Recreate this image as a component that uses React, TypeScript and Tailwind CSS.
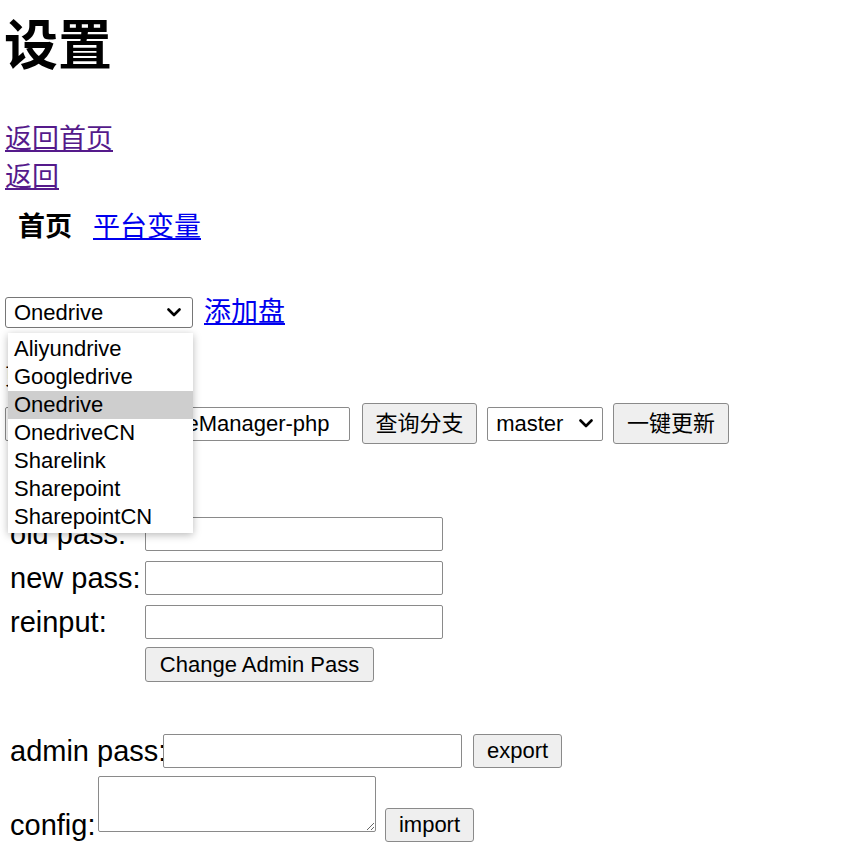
import React from "react";

function Chevron({ className }: { className?: string }) {
  return (
    <svg className={className} width="14" height="9" viewBox="0 0 14 9" fill="none">
      <path d="M1.5 1.5 L7 7 L12.5 1.5" stroke="#000" strokeWidth="2.6" strokeLinecap="round" strokeLinejoin="round" />
    </svg>
  );
}

const options = ["Aliyundrive", "Googledrive", "Onedrive", "OnedriveCN", "Sharelink", "Sharepoint", "SharepointCN"];

export default function App() {
  return (
    <div className="relative min-h-[853px] w-[857px] overflow-hidden bg-white text-black font-['Liberation_Sans','Noto_Sans_CJK_SC',sans-serif]">
      <h1 className="pl-[4px] pt-[16px] text-[54px] leading-[60px] font-bold">设置</h1>

      <div className="mt-[44px] pl-[5px] text-[27px] leading-[38px]">
        <div>
          <a href="#" className="text-[#551a8b] underline">返回首页</a>
        </div>
        <div>
          <a href="#" className="text-[#551a8b] underline">返回</a>
        </div>
      </div>

      <div className="mt-[12px] flex pl-[18px] text-[27px] leading-[38px]">
        <span className="font-bold">首页</span>
        <a href="#" className="ml-[21px] text-[#0000ee] underline">平台变量</a>
      </div>

      <div className="mt-[51px] flex items-center pl-[5px]">
        <div className="flex h-[31px] w-[188px] items-center justify-between rounded-[3px] border-[1.5px] border-[#767676] bg-white pl-[8px] pr-[11px] text-[22px] leading-none">
          <span>Onedrive</span>
          <Chevron />
        </div>
        <a href="#" className="ml-[11px] text-[27px] leading-[31px] text-[#0000ee] underline">添加盘</a>
      </div>

      <div className="mt-[34px] pl-[5px] text-[22px] leading-[30px]">更新到：</div>

      <div className="mt-[11px] flex h-[41px] items-center pl-[5px] text-[22px]">
        <input
          readOnly
          value="qkqpttgf"
          className="h-[34px] w-[131px] rounded-[2px] border-[1.5px] border-[#8a8a8a] px-[6px] text-[22px] outline-none"
        />
        <span className="mx-[4px]">/</span>
        <input
          readOnly
          value="OneManager-php"
          className="h-[34px] w-[200px] rounded-[2px] border-[1.5px] border-[#8a8a8a] px-[6px] text-[22px] outline-none"
        />
        <button className="ml-[12px] h-[41px] w-[115px] rounded-[3px] border-[1.5px] border-[#8a8a8a] bg-[#efefef] text-[22px] leading-none">
          查询分支
        </button>
        <div className="ml-[10px] flex h-[34px] w-[116px] items-center justify-between rounded-[2px] border-[1.5px] border-[#8a8a8a] bg-white pl-[8px] pr-[9px] text-[22px] leading-none">
          <span>master</span>
          <Chevron />
        </div>
        <button className="ml-[10px] h-[41px] w-[116px] rounded-[3px] border-[1.5px] border-[#8a8a8a] bg-[#efefef] text-[22px] leading-none">
          一键更新
        </button>
      </div>

      <div className="mt-[68px] text-[29px]">
        {["old pass:", "new pass:", "reinput:"].map((l) => (
          <div key={l} className="flex h-[44px] items-center">
            <span className="w-[145px] shrink-0 whitespace-nowrap pl-[10px] leading-[34px]">{l}</span>
            <input
              type="password"
              readOnly
              className="h-[34px] w-[298px] rounded-[2px] border-[1.5px] border-[#8a8a8a] outline-none"
            />
          </div>
        ))}
        <div className="flex h-[41px] items-center pl-[145px]">
          <button className="h-[35px] w-[229px] rounded-[3px] border-[1.5px] border-[#8a8a8a] bg-[#efefef] text-[22px] leading-none">
            Change Admin Pass
          </button>
        </div>
      </div>

      <div className="mt-[49px] flex h-[34px] items-center text-[29px]">
        <span className="w-[163px] shrink-0 whitespace-nowrap pl-[10px] leading-[34px]">admin pass:</span>
        <input
          type="password"
          readOnly
          className="h-[34px] w-[299px] rounded-[2px] border-[1.5px] border-[#8a8a8a] outline-none"
        />
        <button className="ml-[11px] h-[34px] w-[89px] rounded-[3px] border-[1.5px] border-[#8a8a8a] bg-[#efefef] text-[22px] leading-none">
          export
        </button>
      </div>

      <div className="mt-[8px] flex items-start text-[29px]">
        <span className="mt-[32px] w-[98px] shrink-0 whitespace-nowrap pl-[10px] leading-[34px]">config:</span>
        <textarea
          readOnly
          className="h-[56px] w-[278px] rounded-[2px] border-[1.5px] border-[#8a8a8a] outline-none"
        />
        <button className="ml-[9px] mt-[32px] h-[34px] w-[89px] rounded-[3px] border-[1.5px] border-[#8a8a8a] bg-[#efefef] text-[22px] leading-none">
          import
        </button>
      </div>

      <div className="absolute left-[8px] top-[333px] w-[185px] bg-white pb-[2px] pt-[2px] text-[22px] shadow-[0_2px_8px_rgba(0,0,0,0.28)]">
        {options.map((o) => (
          <div
            key={o}
            className={
              o === "Onedrive"
                ? "flex h-[28px] items-center bg-[#cecece] pl-[6px] leading-none"
                : "flex h-[28px] items-center pl-[6px] leading-none"
            }
          >
            {o}
          </div>
        ))}
      </div>
    </div>
  );
}
